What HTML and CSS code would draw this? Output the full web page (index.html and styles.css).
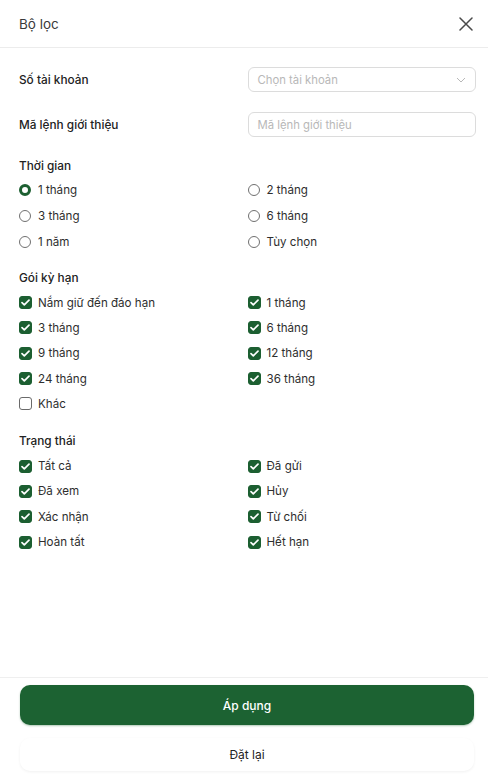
FILE: index.html
```html
<!DOCTYPE html>
<html lang="vi">
<head>
<meta charset="utf-8">
<title>Bộ lọc</title>
<link rel="stylesheet" href="styles.css">
</head>
<body>
<div class="sheet">
  <header class="header">
    <h1 class="title">Bộ lọc</h1>
    <button class="close" aria-label="Đóng">
      <svg width="14" height="14" viewBox="0 0 14 14"><path d="M1 1L13 13M13 1L1 13" stroke="#4a4a4a" stroke-width="1.5" stroke-linecap="round"/></svg>
    </button>
  </header>

  <main class="content">
    <div class="field-row">
      <span class="field-label">Số tài khoản</span>
      <div class="select">
        <span class="placeholder">Chọn tài khoản</span>
        <svg width="10" height="6" viewBox="0 0 10 6"><path d="M1 1L5 5L9 1" fill="none" stroke="#b8b8b8" stroke-width="1"/></svg>
      </div>
    </div>
    <div class="field-row second">
      <span class="field-label">Mã lệnh giới thiệu</span>
      <div class="input"><span class="placeholder">Mã lệnh giới thiệu</span></div>
    </div>

    <section class="group first">
      <h2 class="group-title">Thời gian</h2>
      <div class="options radios">
        <label class="opt"><span class="radio on"></span>1 tháng</label>
        <label class="opt"><span class="radio"></span>2 tháng</label>
        <label class="opt"><span class="radio"></span>3 tháng</label>
        <label class="opt"><span class="radio"></span>6 tháng</label>
        <label class="opt"><span class="radio"></span>1 năm</label>
        <label class="opt"><span class="radio"></span>Tùy chọn</label>
      </div>
    </section>

    <section class="group">
      <h2 class="group-title">Gói kỳ hạn</h2>
      <div class="options checks">
        <label class="opt"><span class="check on"><svg width="9" height="7" viewBox="0 0 9 7"><path d="M1 3.6L3.3 5.8L8 1.2" fill="none" stroke="#fff" stroke-width="1.7" stroke-linecap="round" stroke-linejoin="round"/></svg></span>Nắm giữ đến đáo hạn</label>
        <label class="opt"><span class="check on"><svg width="9" height="7" viewBox="0 0 9 7"><path d="M1 3.6L3.3 5.8L8 1.2" fill="none" stroke="#fff" stroke-width="1.7" stroke-linecap="round" stroke-linejoin="round"/></svg></span>1 tháng</label>
        <label class="opt"><span class="check on"><svg width="9" height="7" viewBox="0 0 9 7"><path d="M1 3.6L3.3 5.8L8 1.2" fill="none" stroke="#fff" stroke-width="1.7" stroke-linecap="round" stroke-linejoin="round"/></svg></span>3 tháng</label>
        <label class="opt"><span class="check on"><svg width="9" height="7" viewBox="0 0 9 7"><path d="M1 3.6L3.3 5.8L8 1.2" fill="none" stroke="#fff" stroke-width="1.7" stroke-linecap="round" stroke-linejoin="round"/></svg></span>6 tháng</label>
        <label class="opt"><span class="check on"><svg width="9" height="7" viewBox="0 0 9 7"><path d="M1 3.6L3.3 5.8L8 1.2" fill="none" stroke="#fff" stroke-width="1.7" stroke-linecap="round" stroke-linejoin="round"/></svg></span>9 tháng</label>
        <label class="opt"><span class="check on"><svg width="9" height="7" viewBox="0 0 9 7"><path d="M1 3.6L3.3 5.8L8 1.2" fill="none" stroke="#fff" stroke-width="1.7" stroke-linecap="round" stroke-linejoin="round"/></svg></span>12 tháng</label>
        <label class="opt"><span class="check on"><svg width="9" height="7" viewBox="0 0 9 7"><path d="M1 3.6L3.3 5.8L8 1.2" fill="none" stroke="#fff" stroke-width="1.7" stroke-linecap="round" stroke-linejoin="round"/></svg></span>24 tháng</label>
        <label class="opt"><span class="check on"><svg width="9" height="7" viewBox="0 0 9 7"><path d="M1 3.6L3.3 5.8L8 1.2" fill="none" stroke="#fff" stroke-width="1.7" stroke-linecap="round" stroke-linejoin="round"/></svg></span>36 tháng</label>
        <label class="opt"><span class="check"></span>Khác</label>
      </div>
    </section>

    <section class="group last">
      <h2 class="group-title">Trạng thái</h2>
      <div class="options checks">
        <label class="opt"><span class="check on"><svg width="9" height="7" viewBox="0 0 9 7"><path d="M1 3.6L3.3 5.8L8 1.2" fill="none" stroke="#fff" stroke-width="1.7" stroke-linecap="round" stroke-linejoin="round"/></svg></span>Tất cả</label>
        <label class="opt"><span class="check on"><svg width="9" height="7" viewBox="0 0 9 7"><path d="M1 3.6L3.3 5.8L8 1.2" fill="none" stroke="#fff" stroke-width="1.7" stroke-linecap="round" stroke-linejoin="round"/></svg></span>Đã gửi</label>
        <label class="opt"><span class="check on"><svg width="9" height="7" viewBox="0 0 9 7"><path d="M1 3.6L3.3 5.8L8 1.2" fill="none" stroke="#fff" stroke-width="1.7" stroke-linecap="round" stroke-linejoin="round"/></svg></span>Đã xem</label>
        <label class="opt"><span class="check on"><svg width="9" height="7" viewBox="0 0 9 7"><path d="M1 3.6L3.3 5.8L8 1.2" fill="none" stroke="#fff" stroke-width="1.7" stroke-linecap="round" stroke-linejoin="round"/></svg></span>Hủy</label>
        <label class="opt"><span class="check on"><svg width="9" height="7" viewBox="0 0 9 7"><path d="M1 3.6L3.3 5.8L8 1.2" fill="none" stroke="#fff" stroke-width="1.7" stroke-linecap="round" stroke-linejoin="round"/></svg></span>Xác nhận</label>
        <label class="opt"><span class="check on"><svg width="9" height="7" viewBox="0 0 9 7"><path d="M1 3.6L3.3 5.8L8 1.2" fill="none" stroke="#fff" stroke-width="1.7" stroke-linecap="round" stroke-linejoin="round"/></svg></span>Từ chối</label>
        <label class="opt"><span class="check on"><svg width="9" height="7" viewBox="0 0 9 7"><path d="M1 3.6L3.3 5.8L8 1.2" fill="none" stroke="#fff" stroke-width="1.7" stroke-linecap="round" stroke-linejoin="round"/></svg></span>Hoàn tất</label>
        <label class="opt"><span class="check on"><svg width="9" height="7" viewBox="0 0 9 7"><path d="M1 3.6L3.3 5.8L8 1.2" fill="none" stroke="#fff" stroke-width="1.7" stroke-linecap="round" stroke-linejoin="round"/></svg></span>Hết hạn</label>
      </div>
    </section>
  </main>

  <footer class="footer">
    <button class="btn-apply">Áp dụng</button>
    <button class="btn-reset">Đặt lại</button>
  </footer>
</div>
</body>
</html>
```
FILE: styles.css
```css
* { box-sizing: border-box; }
html, body { margin: 0; padding: 0; background: #fff; }
body {
  font-family: "Inter", "Noto Sans", sans-serif;
  color: #222;
  font-size: 12px;
}
.sheet {
  height: 774px;
  display: flex;
  flex-direction: column;
}
.header {
  height: 48px;
  border-bottom: 1px solid #ececec;
  display: flex;
  align-items: center;
  justify-content: space-between;
  padding: 0 15px 0 19px;
}
.title {
  margin: 0;
  font-size: 13.5px;
  font-weight: 400;
  color: #3a3a3a;
}
.close {
  border: 0;
  background: none;
  padding: 0;
  width: 14px;
  height: 14px;
  display: flex;
}
.content {
  flex: 1;
  padding: 19px 12px 0 19px;
}
.field-row {
  display: grid;
  grid-template-columns: 1fr 1fr;
  align-items: center;
  height: 25px;
}
.field-row.second { margin-top: 20px; }
.field-label { font-size: 11.8px; font-weight: 500; color: #222; }
.select, .input {
  height: 25px;
  border: 1px solid #dcdcdc;
  border-radius: 6px;
  display: flex;
  align-items: center;
  justify-content: space-between;
  padding: 0 9px;
}
.placeholder { color: #b8b8b8; font-size: 11.3px; }
.group { margin-top: 13px; }
.group.first { margin-top: 19px; }
.group.last { margin-top: 15px; }
.group-title {
  margin: 0;
  height: 20px;
  line-height: 20px;
  font-size: 11.8px;
  font-weight: 500;
  color: #222;
}
.options {
  display: grid;
  grid-template-columns: 1fr 1fr;
}
.radios { grid-auto-rows: 26px; margin-top: 1px; }
.checks { grid-auto-rows: 25.3px; margin-top: 2px; }
.opt {
  display: flex;
  align-items: center;
  gap: 6px;
  font-size: 11.6px;
  color: #2e2e2e;
}
.radio {
  width: 12px;
  height: 12px;
  border: 1px solid #707070;
  border-radius: 50%;
  flex: none;
  margin: 0 1px 0 0;
}
.radio.on {
  border: 3.5px solid #1c5f31;
  background: #fff;
}
.check {
  width: 13px;
  height: 13px;
  border: 1px solid #6a6a6a;
  border-radius: 3px;
  flex: none;
  display: flex;
  align-items: center;
  justify-content: center;
}
.check.on {
  background: #1c5f31;
  border-color: #1c5f31;
}
.footer {
  border-top: 1px solid #efefef;
  padding: 7px 14px 3px 20px;
  display: flex;
  flex-direction: column;
  gap: 13px;
}
.btn-apply {
  height: 40px;
  border: 0;
  border-radius: 10px;
  background: #1c6232;
  color: #fff;
  font-family: inherit;
  font-size: 12px;
  font-weight: 500;
  box-shadow: 0 1px 2px rgba(28, 98, 50, 0.35);
}
.btn-reset {
  height: 33px;
  border: 0;
  border-radius: 10px;
  background: #fff;
  color: #222;
  font-family: inherit;
  font-size: 12px;
  font-weight: 400;
  box-shadow: 0 1px 3px rgba(0, 0, 0, 0.06);
}
```
